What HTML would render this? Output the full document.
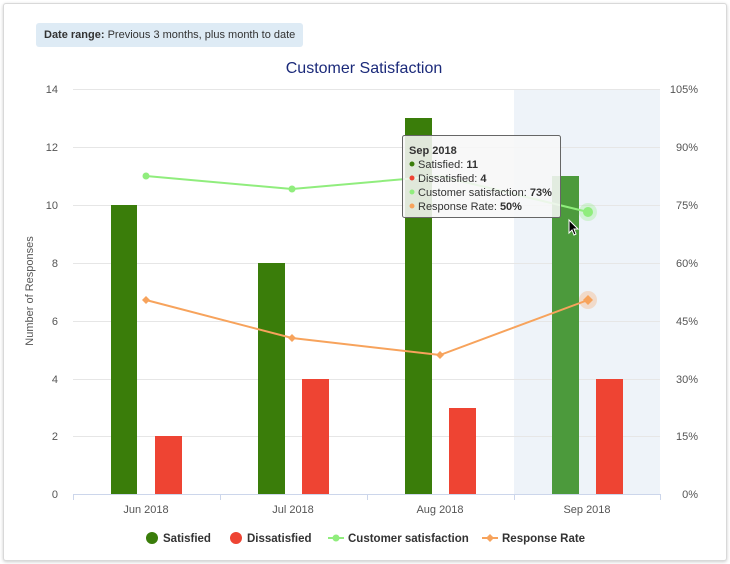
<!DOCTYPE html>
<html><head><style>
html,body{margin:0;padding:0;background:#fff;}
body{width:730px;height:564px;overflow:hidden;font-family:"Liberation Sans",sans-serif;}
.card{position:absolute;left:3px;top:3px;width:722px;height:556px;border:1px solid #d9d9d9;border-radius:3px;box-shadow:0 1px 3px rgba(0,0,0,.2);background:#fff;}
.dr{position:absolute;left:36px;top:23px;height:24px;line-height:24px;padding:0 8px;background:#deebf5;border-radius:3px;font-size:11px;color:#333;}
</style></head><body>
<div class="card"></div>
<div class="dr"><b>Date range:</b> Previous 3 months, plus month to date</div>
<svg width="730" height="564" style="position:absolute;left:0;top:0" font-family="Liberation Sans, sans-serif">
<rect x="514" y="89" width="146" height="405" fill="#eef3f9"/>
<text x="364" y="73" text-anchor="middle" font-size="16" fill="#1b2a7a">Customer Satisfaction</text>
<g stroke="#e6e6e6" stroke-width="1">
<line x1="73" x2="660" y1="89.5" y2="89.5"/><line x1="73" x2="660" y1="147.5" y2="147.5"/>
<line x1="73" x2="660" y1="205.5" y2="205.5"/><line x1="73" x2="660" y1="263.5" y2="263.5"/>
<line x1="73" x2="660" y1="321.5" y2="321.5"/><line x1="73" x2="660" y1="379.5" y2="379.5"/>
<line x1="73" x2="660" y1="436.5" y2="436.5"/>
</g>
<g font-size="11" fill="#555" text-anchor="end">
<text x="58" y="93">14</text><text x="58" y="151">12</text><text x="58" y="209">10</text>
<text x="58" y="267">8</text><text x="58" y="325">6</text><text x="58" y="383">4</text>
<text x="58" y="440">2</text><text x="58" y="498">0</text>
</g>
<g font-size="11" fill="#555" text-anchor="end">
<text x="698" y="93">105%</text><text x="698" y="151">90%</text><text x="698" y="209">75%</text>
<text x="698" y="267">60%</text><text x="698" y="325">45%</text><text x="698" y="383">30%</text>
<text x="698" y="440">15%</text><text x="698" y="498">0%</text>
</g>
<text transform="translate(33,291) rotate(-90)" text-anchor="middle" font-size="11" fill="#555">Number of Responses</text>
<g fill="#3a7d0a">
<rect x="111" y="205" width="26" height="289"/><rect x="258" y="263" width="27" height="231"/>
<rect x="405" y="118" width="27" height="376"/>
</g>
<rect x="552" y="176" width="27" height="318" fill="#4c9a3c"/>
<g fill="#ee4433">
<rect x="155" y="436" width="27" height="58"/><rect x="302" y="379" width="27" height="115"/>
<rect x="449" y="408" width="27" height="86"/><rect x="596" y="379" width="27" height="115"/>
</g>
<line x1="73" x2="660" y1="494.5" y2="494.5" stroke="#ccd6eb"/>
<g stroke="#ccd6eb"><line x1="73.5" x2="73.5" y1="494" y2="500"/><line x1="220.5" x2="220.5" y1="494" y2="500"/><line x1="367.5" x2="367.5" y1="494" y2="500"/><line x1="514.5" x2="514.5" y1="494" y2="500"/><line x1="660.5" x2="660.5" y1="494" y2="500"/></g>
<g font-size="11" fill="#555" text-anchor="middle">
<text x="146" y="513">Jun 2018</text><text x="293" y="513">Jul 2018</text>
<text x="440" y="513">Aug 2018</text><text x="587" y="513">Sep 2018</text>
</g>
<polyline points="146,176 292,189 440,176 588,212" fill="none" stroke="#90ed7d" stroke-width="2"/>
<circle cx="146" cy="176" r="3.5" fill="#90ed7d"/><circle cx="292" cy="189" r="3.5" fill="#90ed7d"/>
<circle cx="588" cy="212" r="9" fill="#90ed7d" opacity="0.3"/><circle cx="588" cy="212" r="5" fill="#90ed7d"/>
<polyline points="146,300 292,338 440,355 588,300" fill="none" stroke="#f7a35c" stroke-width="2"/>
<g fill="#f7a35c">
<path d="M146 296l4 4-4 4-4-4z"/><path d="M292 334l4 4-4 4-4-4z"/><path d="M440 351l4 4-4 4-4-4z"/>
<circle cx="588" cy="300" r="9" opacity="0.3"/><path d="M588 295l5 5-5 5-5-5z"/>
</g>
<rect x="402.5" y="135.5" width="158" height="82" rx="2" fill="rgba(247,247,247,0.88)" stroke="#666"/>
<g font-size="11" fill="#333">
<text x="409" y="154" font-weight="bold">Sep 2018</text>
<circle cx="412" cy="164" r="2.5" fill="#3a7d0a"/><text x="418" y="168">Satisfied: <tspan font-weight="bold">11</tspan></text>
<circle cx="412" cy="178" r="2.5" fill="#ee4433"/><text x="418" y="182">Dissatisfied: <tspan font-weight="bold">4</tspan></text>
<circle cx="412" cy="192" r="2.5" fill="#90ed7d"/><text x="418" y="196">Customer satisfaction: <tspan font-weight="bold">73%</tspan></text>
<circle cx="412" cy="206" r="2.5" fill="#f7a35c"/><text x="418" y="210">Response Rate: <tspan font-weight="bold">50%</tspan></text>
</g>
<path d="M569 220v13l3-3 2 5 2-1-2-5h4z" fill="#000" stroke="#fff" stroke-width="1"/>
<g font-size="11.5" font-weight="bold" fill="#333">
<circle cx="152" cy="538" r="6" fill="#3a7d0a"/><text x="163" y="542">Satisfied</text>
<circle cx="236" cy="538" r="6" fill="#ee4433"/><text x="247" y="542">Dissatisfied</text>
<line x1="328" x2="344" y1="538" y2="538" stroke="#90ed7d" stroke-width="2"/><circle cx="336" cy="538" r="3.5" fill="#90ed7d"/><text x="348" y="542">Customer satisfaction</text>
<line x1="482" x2="498" y1="538" y2="538" stroke="#f7a35c" stroke-width="2"/><path d="M490 534l4 4-4 4-4-4z" fill="#f7a35c"/><text x="502" y="542">Response Rate</text>
</g>
</svg>
</body></html>
